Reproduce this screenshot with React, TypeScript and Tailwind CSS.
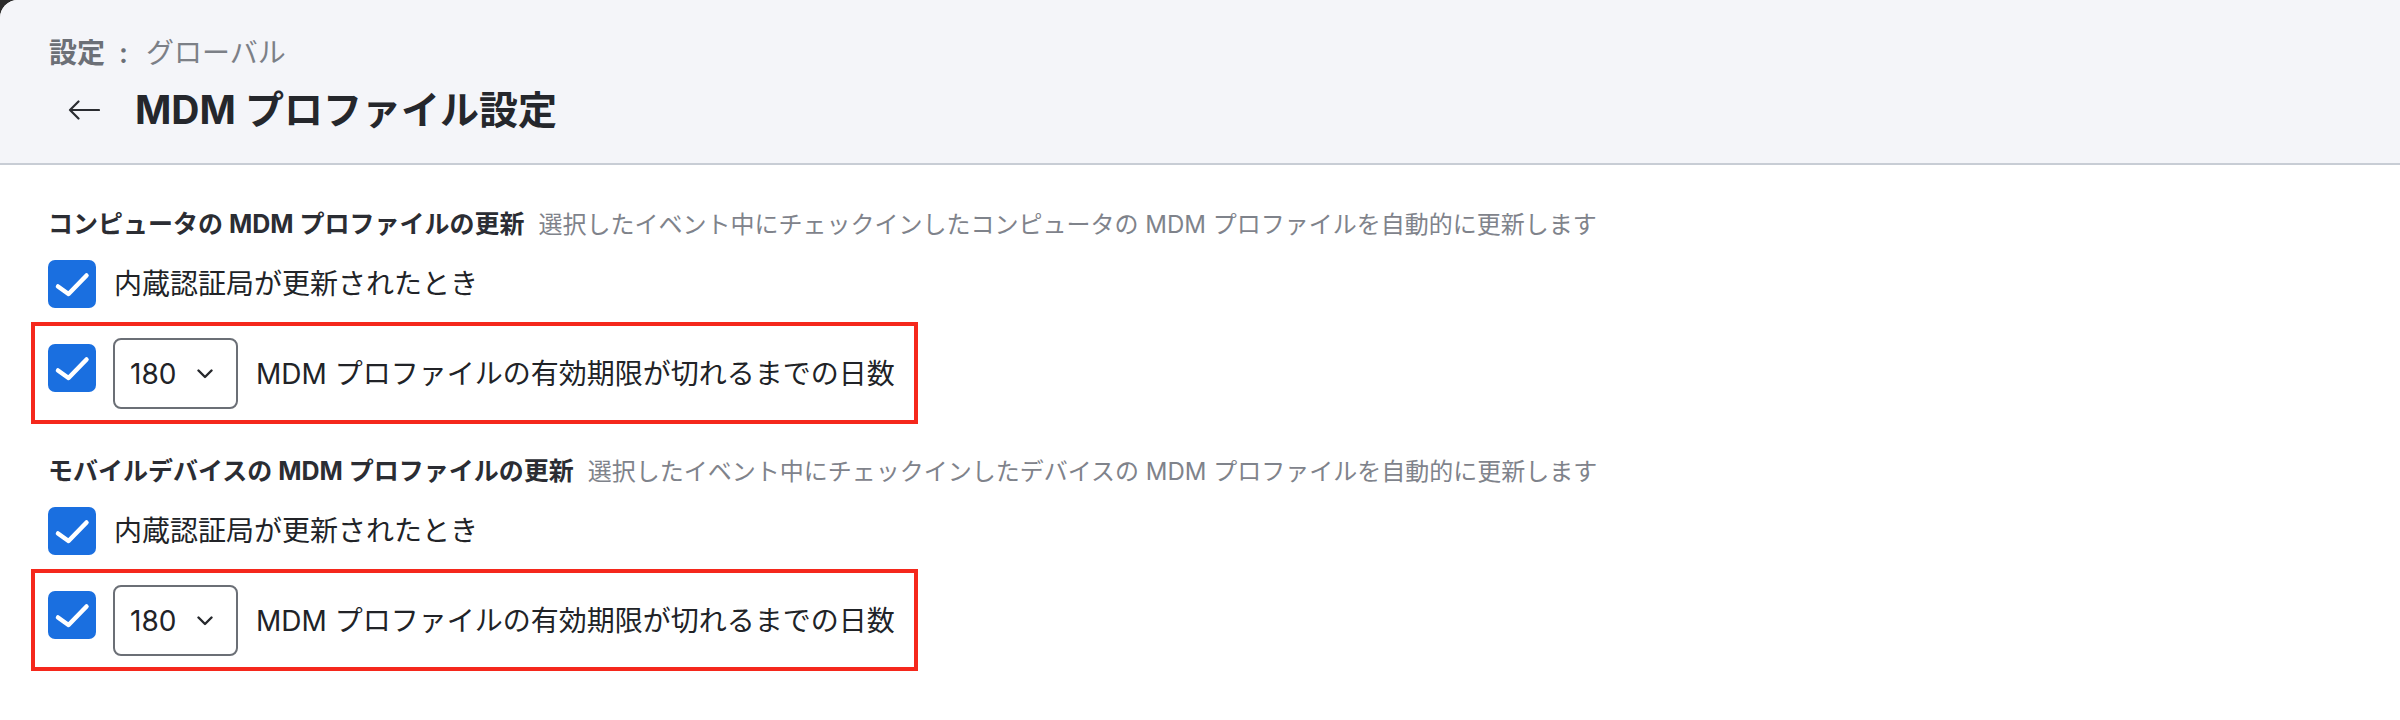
import React from "react";

const Checkbox = ({ className = "" }: { className?: string }) => (
  <span className={`flex h-[48px] w-[48px] shrink-0 items-center justify-center rounded-[7px] bg-[#1a6fe0] ${className}`}>
    <svg width="48" height="48" viewBox="0 0 48 48" fill="none">
      <path d="M10 26.5 L20.5 34 L38.5 15.5" stroke="white" strokeWidth="4.5" strokeLinecap="round" strokeLinejoin="round" />
    </svg>
  </span>
);

const DaysSelect = () => (
  <div className="ml-[17px] flex h-[71px] w-[125px] shrink-0 items-center justify-between rounded-[8px] border-2 border-[#6b6f76] bg-white pl-[15px] pr-[23px]">
    <span className="text-[28px] leading-none text-[#212327]">180</span>
    <svg width="16" height="10" viewBox="0 0 16 10" fill="none">
      <path d="M1.5 1.5 L8 8 L14.5 1.5" stroke="#26282c" strokeWidth="2.4" strokeLinecap="round" strokeLinejoin="round" />
    </svg>
  </div>
);

interface SectionProps {
  title: string;
  description: string;
  className?: string;
}

const ProfileSection = ({ title, description, className = "" }: SectionProps) => (
  <section className={className}>
    <div className="flex h-[36px] items-center">
      <h2 className="text-[25px] font-bold text-[#2b2d33]">{title}</h2>
      <p className="ml-[14px] text-[24px] text-[#7f838b]">{description}</p>
    </div>

    <label className="mt-[17px] flex h-[48px] items-center">
      <Checkbox />
      <span className="ml-[18px] text-[28px] text-[#212327]">内蔵認証局が更新されたとき</span>
    </label>

    <div className="-ml-[17px] mt-[14px] w-[887px] border-4 border-[#f5281c] pb-[11px] pl-[13px] pt-[12px]">
      <div className="flex items-center">
        <Checkbox className="mb-[12px]" />
        <DaysSelect />
        <span className="ml-[18px] text-[28px] text-[#212327]">MDM プロファイルの有効期限が切れるまでの日数</span>
      </div>
    </div>
  </section>
);

export default function App() {
  return (
    <div className="min-h-screen bg-[#2c2c2c] font-[Inter,'Noto_Sans_CJK_JP',sans-serif]">
      <div className="min-h-[720px] overflow-hidden rounded-tl-[18px] bg-white">
        <header className="border-b-2 border-[#c8cdd5] bg-[#f4f5f9] px-[49px] pb-[29px] pt-[33px]">
          <div className="flex h-[40px] items-center text-[28px]">
            <span className="font-semibold text-[#6c7077]">設定</span>
            <span className="ml-[14px] mr-[18px] font-semibold text-[#6c7077]">:</span>
            <span className="text-[#7c8087]">グローバル</span>
          </div>
          <div className="mt-[13px] flex h-[48px] items-center">
            <svg className="ml-[19px]" width="32" height="22" viewBox="0 0 32 22" fill="none">
              <path d="M31 11 H2 M10.5 2.5 L2 11 L10.5 19.5" stroke="#2a2c31" strokeWidth="2.2" strokeLinecap="round" strokeLinejoin="round" />
            </svg>
            <h1 className="ml-[35px] text-[39px] font-bold text-[#25272c]">MDM プロファイル設定</h1>
          </div>
        </header>

        <main className="px-[48px] pt-[42px]">
          <ProfileSection
            title="コンピュータの MDM プロファイルの更新"
            description="選択したイベント中にチェックインしたコンピュータの MDM プロファイルを自動的に更新します"
          />
          <ProfileSection
            className="mt-[30px]"
            title="モバイルデバイスの MDM プロファイルの更新"
            description="選択したイベント中にチェックインしたデバイスの MDM プロファイルを自動的に更新します"
          />
        </main>
      </div>
    </div>
  );
}
